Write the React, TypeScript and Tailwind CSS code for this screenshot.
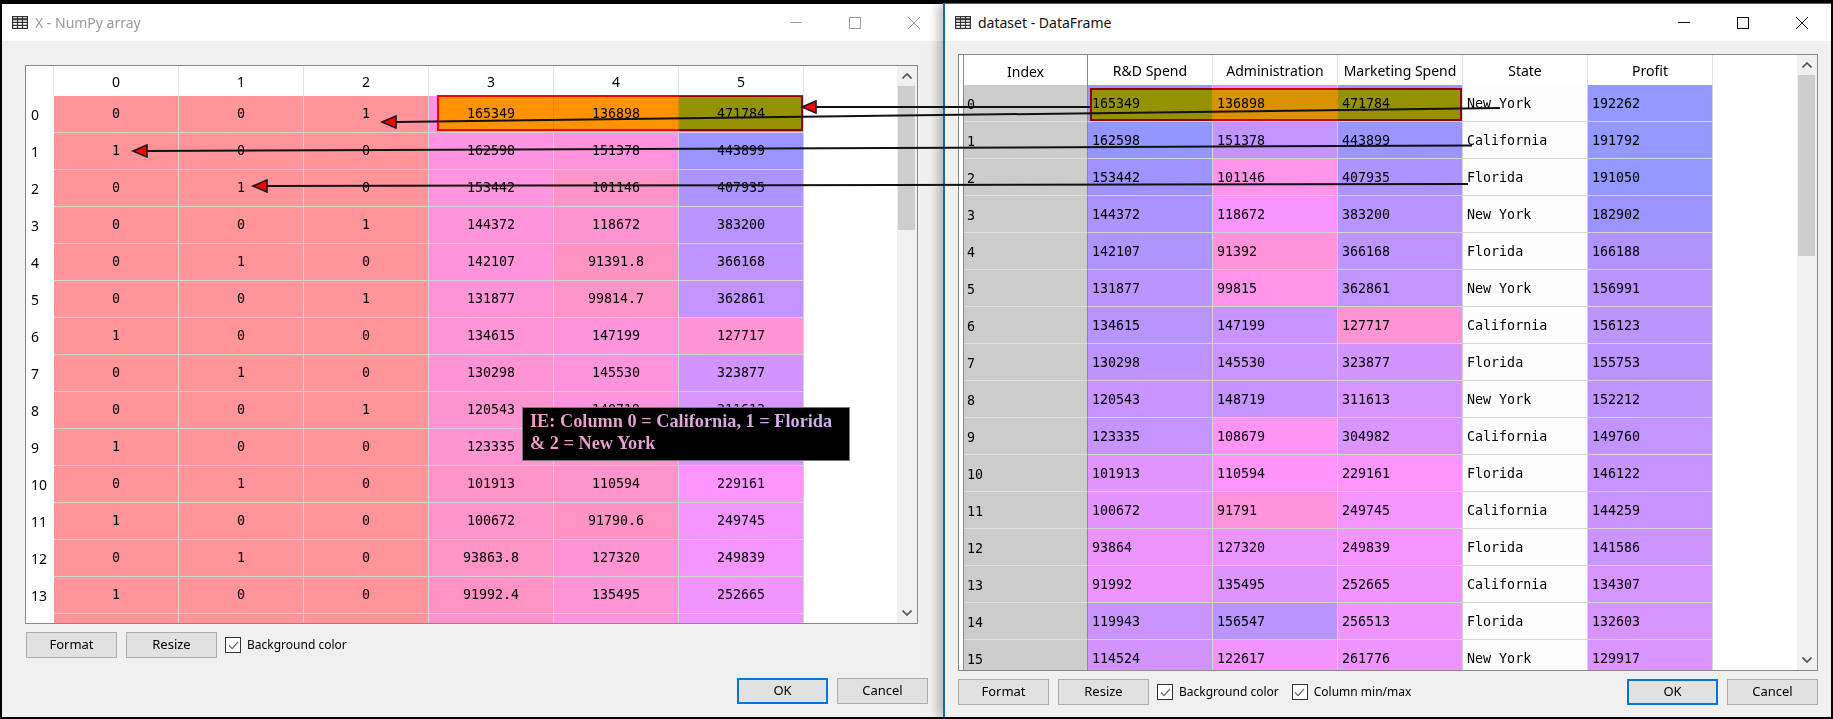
const UI = "font-['Noto_Sans',sans-serif]";

const npRows: number[][] = [
  [0, 0, 1, 165349, 136898, 471784],
  [1, 0, 0, 162598, 151378, 443899],
  [0, 1, 0, 153442, 101146, 407935],
  [0, 0, 1, 144372, 118672, 383200],
  [0, 1, 0, 142107, 91391.8, 366168],
  [0, 0, 1, 131877, 99814.7, 362861],
  [1, 0, 0, 134615, 147199, 127717],
  [0, 1, 0, 130298, 145530, 323877],
  [0, 0, 1, 120543, 148719, 311613],
  [1, 0, 0, 123335, 108679, 304982],
  [0, 1, 0, 101913, 110594, 229161],
  [1, 0, 0, 100672, 91790.6, 249745],
  [0, 1, 0, 93863.8, 127320, 249839],
  [1, 0, 0, 91992.4, 135495, 252665],
  [0, 1, 0, 119943, 156547, 256513],
];

const dfRows: [number, number, number, string, number][] = [
  [165349, 136898, 471784, 'New York', 192262],
  [162598, 151378, 443899, 'California', 191792],
  [153442, 101146, 407935, 'Florida', 191050],
  [144372, 118672, 383200, 'New York', 182902],
  [142107, 91392, 366168, 'Florida', 166188],
  [131877, 99815, 362861, 'New York', 156991],
  [134615, 147199, 127717, 'California', 156123],
  [130298, 145530, 323877, 'Florida', 155753],
  [120543, 148719, 311613, 'New York', 152212],
  [123335, 108679, 304982, 'California', 149760],
  [101913, 110594, 229161, 'Florida', 146122],
  [100672, 91791, 249745, 'California', 144259],
  [93864, 127320, 249839, 'Florida', 141586],
  [91992, 135495, 252665, 'California', 134307],
  [119943, 156547, 256513, 'Florida', 132603],
  [114524, 122617, 261776, 'New York', 129917],
];

// same colour rule as the viewer: high values blue, low values red
function heat(value: number, min: number, max: number) {
  const hue = 0.66 + (0.33 * (max - value)) / (max - min);
  return `hsl(${hue * 360} 100% 79%)`;
}

function GridIcon({ className }: { className: string }) {
  return (
    <svg viewBox="0 0 16 13" className={className} fill="none" stroke="currentColor" strokeWidth="1.2">
      <rect x="0.6" y="0.6" width="14.8" height="11.8" />
      <path d="M0.6 3.2H15.4" strokeWidth="2" />
      <path d="M0.6 6.4H15.4M0.6 9.4H15.4M5.5 0.6V12.4M10.5 0.6V12.4" />
    </svg>
  );
}

function TitleBar({ title, active }: { title: string; active: boolean }) {
  const tone = active ? 'text-[#111111]' : 'text-[#9a9a9a]';
  return (
    <div className={`flex h-[37px] items-center bg-white ${tone}`}>
      <GridIcon className="ml-[10px] h-[13px] w-[16px] text-[#333333]" />
      <span className={`${UI} ml-[7px] text-[14px] leading-none`}>{title}</span>
      <div className="ml-auto flex">
        <div className="flex w-[59px] justify-center">
          <svg viewBox="0 0 12 12" className="h-[12px] w-[12px]" stroke="currentColor" fill="none">
            <path d="M0 5.5H12" />
          </svg>
        </div>
        <div className="flex w-[59px] justify-center">
          <svg viewBox="0 0 12 12" className="h-[12px] w-[12px]" stroke="currentColor" fill="none">
            <rect x="0.5" y="0.5" width="11" height="11" />
          </svg>
        </div>
        <div className="flex w-[59px] justify-center">
          <svg viewBox="0 0 12 12" className="h-[12px] w-[12px]" stroke="currentColor" fill="none">
            <path d="M0 0L12 12M12 0L0 12" />
          </svg>
        </div>
      </div>
    </div>
  );
}

function Chevron({ up }: { up?: boolean }) {
  return (
    <div className="flex h-[20px] items-center justify-center">
      <svg viewBox="0 0 10 6" className="h-[6px] w-[10px]" fill="none" stroke="#555555" strokeWidth="1.7">
        <path d={up ? 'M0.5 5.5L5 1L9.5 5.5' : 'M0.5 0.5L5 5L9.5 0.5'} />
      </svg>
    </div>
  );
}

function Scrollbar({ thumb }: { thumb: string }) {
  return (
    <div className="flex w-[20px] shrink-0 flex-col bg-[#f0f0f0]">
      <Chevron up />
      <div className={`mr-[2px] ml-[1px] bg-[#cdcdcd] ${thumb}`} />
      <div className="flex-1" />
      <Chevron />
    </div>
  );
}

function Btn({ label, primary }: { label: string; primary?: boolean }) {
  return (
    <div
      className={`${UI} flex h-[26px] w-[91px] items-center justify-center bg-[#e1e1e1] text-[13px] text-black ${
        primary ? 'border-2 border-[#0078d7]' : 'border border-[#adadad]'
      }`}
    >
      {label}
    </div>
  );
}

function Check({ label }: { label: string }) {
  return (
    <div className="flex items-center gap-[6px]">
      <div className="flex h-[16px] w-[16px] items-center justify-center border border-[#333333] bg-white">
        <svg viewBox="0 0 12 10" className="h-[9px] w-[11px]" fill="none" stroke="#666666" strokeWidth="1.4">
          <path d="M1 5L4.5 8.5L11 1" />
        </svg>
      </div>
      <span className={`${UI} text-[12px] text-black`}>{label}</span>
    </div>
  );
}

function NumpyWindow() {
  return (
    <div className="flex w-[941px] shrink-0 flex-col bg-[#f0f0f0]">
      <TitleBar title="X - NumPy array" active={false} />
      <div className="flex flex-1 flex-col pt-[24px] pr-[15px] pl-[23px]">
        <div className="relative flex h-[559px] w-[893px] overflow-hidden border border-[#8a8a8a] bg-white">
          <div className="flex-1">
            <div className={`${UI} flex h-[30px] text-[14px] text-black`}>
              <div className="w-[28px] border-r border-[#e2e2e2]" />
              {[0, 1, 2, 3, 4, 5].map((c) => (
                <div key={c} className="flex w-[125px] items-center justify-center border-r border-[#e2e2e2]">
                  {c}
                </div>
              ))}
            </div>
            {npRows.map((row, r) => (
              <div key={r} className="flex h-[37px]">
                <div className={`${UI} flex w-[28px] items-center pl-[5px] text-[14px] text-black`}>{r < 14 && r}</div>
                {row.map((v, c) => (
                  <div
                    key={c}
                    className="flex w-[125px] items-center justify-center border-r border-b border-[#d4d4d4] font-['DejaVu_Sans_Mono',monospace] text-[13.33px] text-black"
                    style={{ backgroundColor: heat(v, 0, 471784) }}
                  >
                    {r < 14 && v}
                  </div>
                ))}
              </div>
            ))}
          </div>
          <Scrollbar thumb="h-[144px]" />
          <div className="absolute top-[29px] left-[411px] h-[36px] w-[366px] border-2 border-[#ff0000] bg-[#ff9200] mix-blend-darken" />
        </div>
        <div className="mt-[8px] ml-[1px] flex items-center gap-[9px]">
          <Btn label="Format" />
          <Btn label="Resize" />
          <div className="-ml-px">
            <Check label="Background color" />
          </div>
        </div>
        <div className="mt-[20px] flex justify-end gap-[9px]">
          <Btn label="OK" primary />
          <Btn label="Cancel" />
        </div>
      </div>
    </div>
  );
}

function DataFrameWindow() {
  const headers = ['R&D Spend', 'Administration', 'Marketing Spend', 'State', 'Profit'];
  // column ranges of the whole table, most of it scrolled out of view
  const ranges: Record<number, [number, number]> = {
    0: [0, 165349],
    1: [51283, 182645],
    2: [0, 471784],
    4: [14681, 192262],
  };
  return (
    <div className="relative z-10 -mt-px flex w-[888px] shrink-0 flex-col border-t border-l-2 border-[#0f6cb4] bg-[#f0f0f0] shadow-[-5px_0_10px_rgba(0,0,0,0.25)]">
      <TitleBar title="dataset - DataFrame" active />
      <div className="flex flex-1 flex-col pt-[13px] pr-[13px] pl-[13px]">
        <div className="relative flex h-[617px] w-[860px] overflow-hidden border border-[#8a8a8a] bg-white">
          <div className="w-[5px] shrink-0 border-r border-[#8a8a8a]" />
          <div className="flex-1">
            <div className={`${UI} flex h-[30px] text-[14px] text-black`}>
              <div className="flex w-[124px] items-center justify-center border-r border-[#8a8a8a] pt-[2px]">Index</div>
              {headers.map((h) => (
                <div key={h} className="flex w-[125px] items-center justify-center border-r border-[#e2e2e2]">
                  {h}
                </div>
              ))}
            </div>
            {dfRows.map((row, r) => (
              <div key={r} className="flex h-[37px] font-['DejaVu_Sans_Mono',monospace] text-[13.33px] text-black">
                <div className="flex w-[124px] items-center border-r border-b border-r-[#8a8a8a] border-b-[#dedede] bg-[#cccccc] pt-[4px] pl-[3px]">
                  {r}
                </div>
                {row.map((v, c) => (
                  <div
                    key={c}
                    className="flex w-[125px] items-center border-r border-b border-[#d4d4d4] bg-[#fcfcfc] pt-[2px] pl-[4px]"
                    style={typeof v === 'number' ? { backgroundColor: heat(v, ranges[c][0], ranges[c][1]) } : undefined}
                  >
                    {v}
                  </div>
                ))}
              </div>
            ))}
          </div>
          <Scrollbar thumb="h-[181px]" />
          <div className="absolute top-[33px] left-[131px] h-[33px] w-[372px] border-2 border-[#ff0000] bg-[#ff9200] mix-blend-darken" />
        </div>
        <div className="mt-[8px] flex items-center">
          <div className="flex items-center gap-[9px]">
            <Btn label="Format" />
            <Btn label="Resize" />
            <div className="-ml-px">
              <Check label="Background color" />
            </div>
          </div>
          <div className="ml-[13px]">
            <Check label="Column min/max" />
          </div>
          <div className="ml-auto flex gap-[9px]">
            <Btn label="OK" primary />
            <Btn label="Cancel" />
          </div>
        </div>
      </div>
    </div>
  );
}

function Arrows() {
  const heads: [number, number, number, number][] = [
    [396, 122, 1500, 108],
    [816, 107, 1090, 107],
    [147, 151, 1472, 145.5],
    [267, 186, 1468, 184],
  ];
  return (
    <svg className="pointer-events-none absolute inset-0 z-20 h-[719px] w-[1833px]" viewBox="0 0 1833 719">
      {heads.map(([x, y, ex, ey]) => (
        <g key={x}>
          <path d={`M${x} ${y}L${ex} ${ey}`} stroke="#111111" strokeWidth="2" fill="none" />
          <path d={`M${x - 14} ${y}L${x} ${y - 6}L${x} ${y + 6}Z`} fill="#ff0000" stroke="#1a1a1a" strokeWidth="1.6" />
        </g>
      ))}
    </svg>
  );
}

export default function App() {
  return (
    <div className="relative flex h-[719px] w-[1833px] overflow-hidden bg-black pt-[4px] pb-[2px] pl-[2px]">
      <NumpyWindow />
      <DataFrameWindow />
      <Arrows />
      <div className="absolute top-[407px] left-[522px] z-30 h-[54px] w-[328px] border border-[#777777] bg-black px-[7px] pt-[3px]">
        <p className="bg-gradient-to-r from-[#f29ac4] to-[#cdb2f5] bg-clip-text font-['Liberation_Serif',serif] text-[18.3px] leading-[21.5px] font-bold text-transparent">
          IE: Column 0 = California, 1 = Florida
          <br />& 2 = New York
        </p>
      </div>
    </div>
  );
}
